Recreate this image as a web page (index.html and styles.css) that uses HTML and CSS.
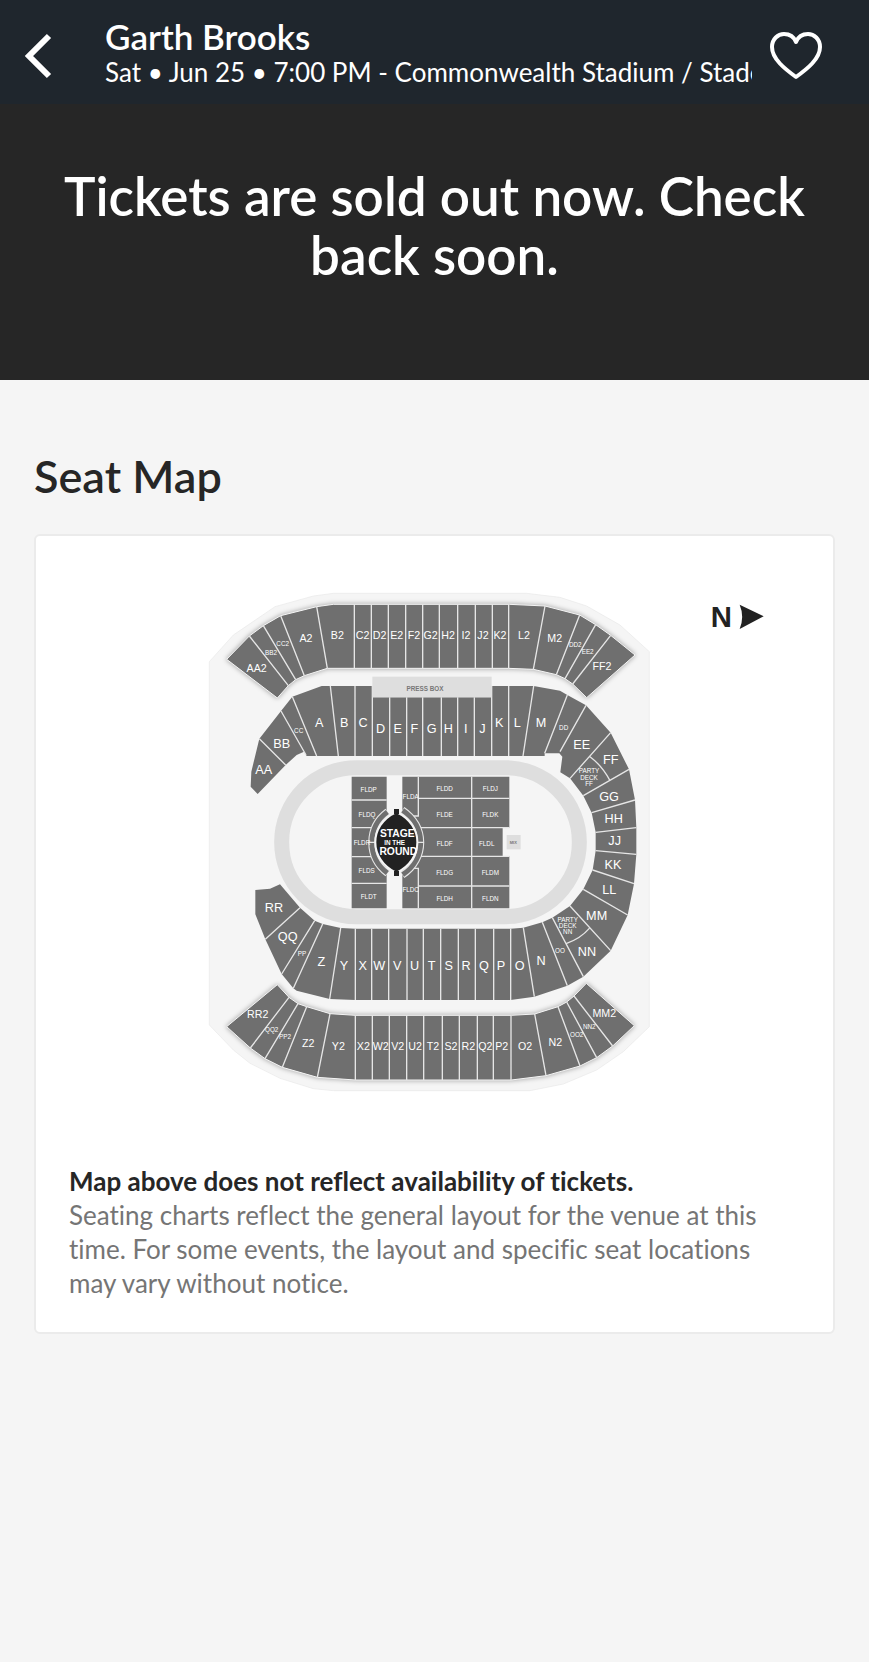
FILE: index.html
```html
<!DOCTYPE html>
<html lang="en">
<head>
    <meta charset="UTF-8">
    <meta name="viewport" content="width=device-width, initial-scale=1.0">
    <title>Garth Brooks - Commonwealth Stadium</title>
    <link rel="stylesheet" href="styles.css">
</head>
<body>
    <header class="header">
        <button type="button" class="icon-btn back-btn" aria-label="Back">
            <svg width="28" height="46" viewBox="0 0 28 46"><path d="M25 3L5 23l20 20" fill="none" stroke="#fff" stroke-width="6"/></svg>
        </button>
        <div class="event-info">
            <h1 class="event-name">Garth Brooks</h1>
            <p class="event-details">Sat • Jun 25 • 7:00 PM - Commonwealth Stadium / Stade Commonwealth</p>
        </div>
        <button type="button" class="icon-btn heart-btn" aria-label="Save to favourites">
            <svg width="52" height="48" viewBox="0 0 52 48"><path d="M26 45C15 37 2 27 2 15C2 7 8 2 14 2C20 2 24 5 26 10C28 5 32 2 38 2C44 2 50 7 50 15C50 27 37 37 26 45Z" fill="none" stroke="#fff" stroke-width="4" stroke-linejoin="round"/></svg>
        </button>
    </header>

    <section class="banner">
        <h2 class="banner-title">Tickets are sold out now. Check back soon.</h2>
    </section>

    <main class="main-container">
        <h2 class="section-title">Seat Map</h2>

        <div class="map-card">
            <svg class="seat-map" viewBox="-393 -36 2193 1719" role="img" aria-label="Seat map">
                <path class="ground" d="M28 245L100 165L225 80L340 48L400 40H980L1080 52L1160 78L1260 135L1348 215V1340L1270 1415L1190 1470L1090 1512L990 1532H400L340 1526L240 1495L150 1450L100 1410L28 1335Z"/>

                <!-- upper deck, west -->
                <path class="deck upper" d="M80 238L148 168L190 137L242 107L350 80L400 73H928L1035 78L1139 105L1187 134L1232 166L1305 225L1160 353L1118 312L1095 296L1069 284L1000 268L926 265H382L313 287L287 299L265 317L232 354Z"/>
                <path class="lines" d="M148 168L265 317M190 137L287 299M242 107L313 287M350 80L382 265M463 73V265M514 73V265M565 73V265M617 73V265M668 73V265M718 73V265M773 73V265M826 73V265M877 73V265M926 73V265M1035 78L1000 268M1139 105L1069 284M1187 134L1095 296M1232 166L1118 312"/>

                <!-- upper deck, east -->
                <path class="deck upper" d="M80 1340L232 1214L267 1252L294 1271L320 1280L390 1301L466 1306H934L1004 1302L1074 1280L1100 1266L1122 1248L1159 1210L1303 1337L1238 1398L1190 1433L1140 1458L1038 1487L934 1500H466L352 1492L247 1462L195 1436L151 1404Z"/>
                <path class="lines" d="M151 1404L267 1252M195 1436L294 1271M247 1462L320 1280M352 1492L390 1301M466 1306V1500M517 1306V1500M568 1306V1500M620 1306V1500M671 1306V1500M727 1306V1500M778 1306V1500M832 1306V1500M880 1306V1500M933 1306V1500M1004 1302L1038 1487M1074 1280L1140 1458M1100 1266L1190 1433M1122 1248L1238 1398"/>

                <!-- lower bowl -->
                <path class="deck" d="M152 620L154 575L178 476L243 393L277 350L365 318H517V352H875V318H1001L1080 332L1102 345L1158 376L1232 458L1287 568L1305 660L1309 743V823L1302 911L1283 1005L1232 1112L1150 1190L1102 1217L1003 1250L932 1260H465L389 1257L290 1232L280 1225L245 1182L196 1078L166 1003V930L210 926L240 913L300 983L344 1022L368 1032L422 1044L466 1046H932L970 1043L1027 1027L1057 1013L1110 978L1150 928L1178 870L1187 812V757L1175 698L1150 647L1110 595L1081 577L1087 530L1078 520H1034V528H320L312 515L290 525L257 555L173 642Z"/>
                <path class="lines" d="M178 476L257 555M243 393L318 525M277 350L350 528M391 318L415 528M465 318V528M517 318V528M569 352V528M620 352V528M668 352V528M724 352V528M773 352V528M823 352V528M875 318V528M926 318V528M1001 318L969 528M1102 345L1034 520M1158 376L1080 515M1232 458L1110 595M1170 530Q1207 558 1230 602M1287 568L1150 647M1305 660L1175 698M1309 743L1187 757M1309 823L1187 812M1302 911L1178 870M1283 1005L1150 928M1232 1112L1110 978M1100 1090Q1142 1075 1168 1045M1150 1190L1057 1013M1102 1217L1027 1027M1003 1250L970 1043M932 1046V1260M881 1046V1260M826 1046V1260M775 1046V1260M722 1046V1260M670 1046V1260M621 1046V1260M566 1046V1260M515 1046V1260M466 1046V1260M422 1044L389 1257M368 1032L280 1225M344 1022L245 1182M300 983L196 1078"/>

                <rect class="block" x="517" y="290" width="358" height="62"/>
                <rect class="track" x="245" y="563" width="893" height="447" rx="223"/>

                <!-- field seats -->
                <path class="deck" d="M455 590H560V985H455ZM607 590H928V743H908V829H928V985H607Z"/>
                <path class="lines" d="M455 660H560M455 743H560M455 830H560M455 910H560M655 590V708H635M655 985V865H635M655 655H928M655 743H928M655 829H928M655 918H928M815 590V985"/>
                <rect class="block" x="920" y="765" width="42" height="43"/>

                <!-- stage -->
                <path class="gap" d="M560 695Q589 665 607 695V880Q589 910 560 880Z"/>
                <path class="arc-edge" d="M563 695C500 742 500 832 563 880M607 690C680 738 680 836 607 885"/>
                <path class="arc" d="M562 696C500 742 500 832 562 879M608 691C680 738 680 836 608 884"/>
                <path class="lines" d="M506 787H528M650 787H672"/>
                <path class="stage" d="M589 696C632 716 652 752 652 787C652 822 632 858 589 879C546 858 526 822 526 787C526 752 546 716 589 696Z"/>
                <path class="stage-tab" d="M582 687H597V702H582ZM582 873H597V888H582Z"/>

                <g class="upper-labels">
                    <text x="170" y="263">AA2</text><text x="318" y="175">A2</text><text x="412" y="165">B2</text>
                    <text x="488" y="165">C2</text><text x="539" y="165">D2</text><text x="590" y="165">E2</text>
                    <text x="642" y="165">F2</text><text x="692" y="165">G2</text><text x="744" y="165">H2</text>
                    <text x="798" y="165">I2</text><text x="849" y="165">J2</text><text x="900" y="165">K2</text>
                    <text x="972" y="165">L2</text><text x="1064" y="175">M2</text><text x="1206" y="259">FF2</text>
                    <text x="173" y="1303">RR2</text><text x="325" y="1390">Z2</text><text x="415" y="1399">Y2</text>
                    <text x="490" y="1399">X2</text><text x="542" y="1399">W2</text><text x="593" y="1399">V2</text>
                    <text x="645" y="1399">U2</text><text x="699" y="1399">T2</text><text x="753" y="1399">S2</text>
                    <text x="805" y="1399">R2</text><text x="856" y="1399">Q2</text><text x="905" y="1399">P2</text>
                    <text x="975" y="1399">O2</text><text x="1066" y="1385">N2</text><text x="1213" y="1300">MM2</text>
                </g>

                <g class="lower-labels">
                    <text x="191" y="570">AA</text><text x="245" y="493">BB</text><text x="358" y="428">A</text>
                    <text x="433" y="428">B</text><text x="489" y="428">C</text><text x="542" y="447">D</text>
                    <text x="593" y="447">E</text><text x="643" y="447">F</text><text x="695" y="447">G</text>
                    <text x="745" y="447">H</text><text x="797" y="447">I</text><text x="847" y="447">J</text>
                    <text x="898" y="428">K</text><text x="952" y="428">L</text><text x="1023" y="428">M</text>
                    <text x="1145" y="496">EE</text><text x="1232" y="539">FF</text><text x="1227" y="650">GG</text>
                    <text x="1241" y="717">HH</text><text x="1244" y="783">JJ</text><text x="1239" y="855">KK</text>
                    <text x="1228" y="931">LL</text><text x="1190" y="1008">MM</text><text x="1161" y="1116">NN</text>
                    <text x="1023" y="1144">N</text><text x="959" y="1158">O</text><text x="903" y="1158">P</text>
                    <text x="852" y="1158">Q</text><text x="798" y="1158">R</text><text x="746" y="1158">S</text>
                    <text x="695" y="1158">T</text><text x="644" y="1158">U</text><text x="592" y="1158">V</text>
                    <text x="538" y="1158">W</text><text x="488" y="1158">X</text><text x="432" y="1158">Y</text>
                    <text x="364" y="1145">Z</text><text x="263" y="1072">QQ</text><text x="222" y="985">RR</text>
                </g>

                <g class="small-labels">
                    <text x="213" y="217">BB2</text><text x="248" y="190">CC2</text>
                    <text x="1126" y="194">DD2</text><text x="1163" y="215">EE2</text>
                    <text x="296" y="452">CC</text><text x="1091" y="442">DD</text>
                    <text x="1080" y="1112">OO</text><text x="306" y="1120">PP</text>
                    <text x="215" y="1347">QQ2</text><text x="255" y="1368">PP2</text>
                    <text x="1130" y="1362">OO2</text><text x="1168" y="1339">NN2</text>
                    <text x="1167" y="572">PARTY</text><text x="1167" y="591">DECK</text><text x="1167" y="609">FF</text>
                    <text x="1103" y="1018">PARTY</text><text x="1103" y="1036">DECK</text><text x="1103" y="1055">NN</text>
                    <text x="506" y="629">FLDP</text><text x="501" y="704">FLDQ</text><text x="486" y="788">FLDR</text>
                    <text x="500" y="872">FLDS</text><text x="506" y="950">FLDT</text>
                    <text x="632" y="650">FLDA</text><text x="632" y="927">FLDC</text>
                    <text x="734" y="625">FLDD</text><text x="734" y="702">FLDE</text><text x="734" y="790">FLDF</text>
                    <text x="734" y="877">FLDG</text><text x="734" y="954">FLDH</text>
                    <text x="871" y="625">FLDJ</text><text x="871" y="702">FLDK</text><text x="860" y="790">FLDL</text>
                    <text x="871" y="877">FLDM</text><text x="871" y="954">FLDN</text>
                </g>

                <g class="stage-labels">
                    <text x="592" y="759">STAGE</text>
                    <text x="584" y="788" class="stage-small">IN THE</text>
                    <text x="595" y="814">ROUND</text>
                </g>

                <text class="press-label" x="675" y="324">PRESS BOX</text>
                <text class="mix-label" x="940" y="788">MIX</text>

                <text class="north" x="1564" y="109">N</text>
                <path class="north-arrow" d="M1619 74L1691 109L1619 147Q1634 110 1619 74Z"/>
            </svg>

            <p class="map-note"><strong>Map above does not reflect availability of tickets.</strong></p>
            <p class="map-text">Seating charts reflect the general layout for the venue at this time. For some events, the layout and specific seat locations may vary without notice.</p>
        </div>
    </main>
</body>
</html>
```
FILE: styles.css
```css
* {
    margin: 0;
    padding: 0;
    box-sizing: border-box;
}

body {
    font-family: Lato, "Liberation Sans", sans-serif;
    font-variant-ligatures: none;
    background-color: #f5f5f5;
    color: #262626;
    min-height: 100vh;
}

.header {
    background-color: #1f262d;
    color: white;
    display: flex;
    align-items: center;
    height: 104px;
    padding: 8px 47px 0 24px;
}

.icon-btn {
    background: none;
    border: none;
    cursor: pointer;
    flex-shrink: 0;
}

.icon-btn svg {
    display: block;
}

.event-info {
    flex: 1;
    min-width: 0;
    margin-left: 53px;
    margin-right: 18px;
    padding-bottom: 5px;
}

.event-name {
    font-size: 35px;
    line-height: 36px;
    font-weight: 600;
}

.event-details {
    font-size: 26px;
    line-height: 36px;
    white-space: nowrap;
    overflow: hidden;
}

.banner {
    background-color: #262626;
    color: white;
    text-align: center;
    padding: 62px 48px 96px;
}

.banner-title {
    font-size: 53px;
    line-height: 59px;
    font-weight: 600;
}

.main-container {
    padding: 72px 34px;
}

.section-title {
    font-size: 45px;
    line-height: 48px;
    font-weight: 600;
    margin-bottom: 34px;
}

.map-card {
    background-color: white;
    border: 2px solid #ebebeb;
    border-radius: 6px;
    padding: 32px 33px;
}

.seat-map {
    display: block;
    width: 100%;
    margin-bottom: 23px;
    font-family: "Liberation Sans", Arial, sans-serif;
}

.seat-map text {
    text-anchor: middle;
    dominant-baseline: central;
}

.ground {
    fill: #f5f5f5;
    stroke: #e8e8e8;
    stroke-width: 2;
}

.deck {
    fill: #6f6f6f;
}

.upper {
    stroke: #f5f5f5;
    stroke-width: 3;
    filter: drop-shadow(0 0 8px rgba(0, 0, 0, 0.35));
}

.lines {
    fill: none;
    stroke: #e6e6e6;
    stroke-width: 4;
}

.block {
    fill: #dedede;
}

.track {
    fill: #f5f5f5;
    stroke: #dedede;
    stroke-width: 45;
}

.gap {
    fill: #f5f5f5;
}

.arc-edge {
    fill: none;
    stroke: #e6e6e6;
    stroke-width: 22;
}

.arc {
    fill: none;
    stroke: #6f6f6f;
    stroke-width: 15;
}

.stage {
    fill: #222;
    stroke: #f5f5f5;
    stroke-width: 6;
}

.stage-tab {
    fill: #222;
}

.upper-labels {
    fill: white;
    font-size: 32px;
}

.lower-labels {
    fill: white;
    font-size: 38px;
}

.small-labels {
    fill: white;
    font-size: 19px;
}

.stage-labels {
    fill: white;
    font-size: 31px;
    font-weight: bold;
}

.stage-small {
    font-size: 19px;
}

.press-label {
    fill: #777;
    font-size: 19px;
    font-weight: bold;
}

.mix-label {
    fill: #777;
    font-size: 12px;
    font-weight: bold;
}

.north {
    fill: #222;
    font-size: 88px;
    font-weight: bold;
}

.north-arrow {
    fill: #222;
}

.map-note,
.map-text {
    font-size: 26px;
    line-height: 34px;
}

.map-note strong {
    font-weight: bold;
}

.map-text {
    color: #757575;
}
```
